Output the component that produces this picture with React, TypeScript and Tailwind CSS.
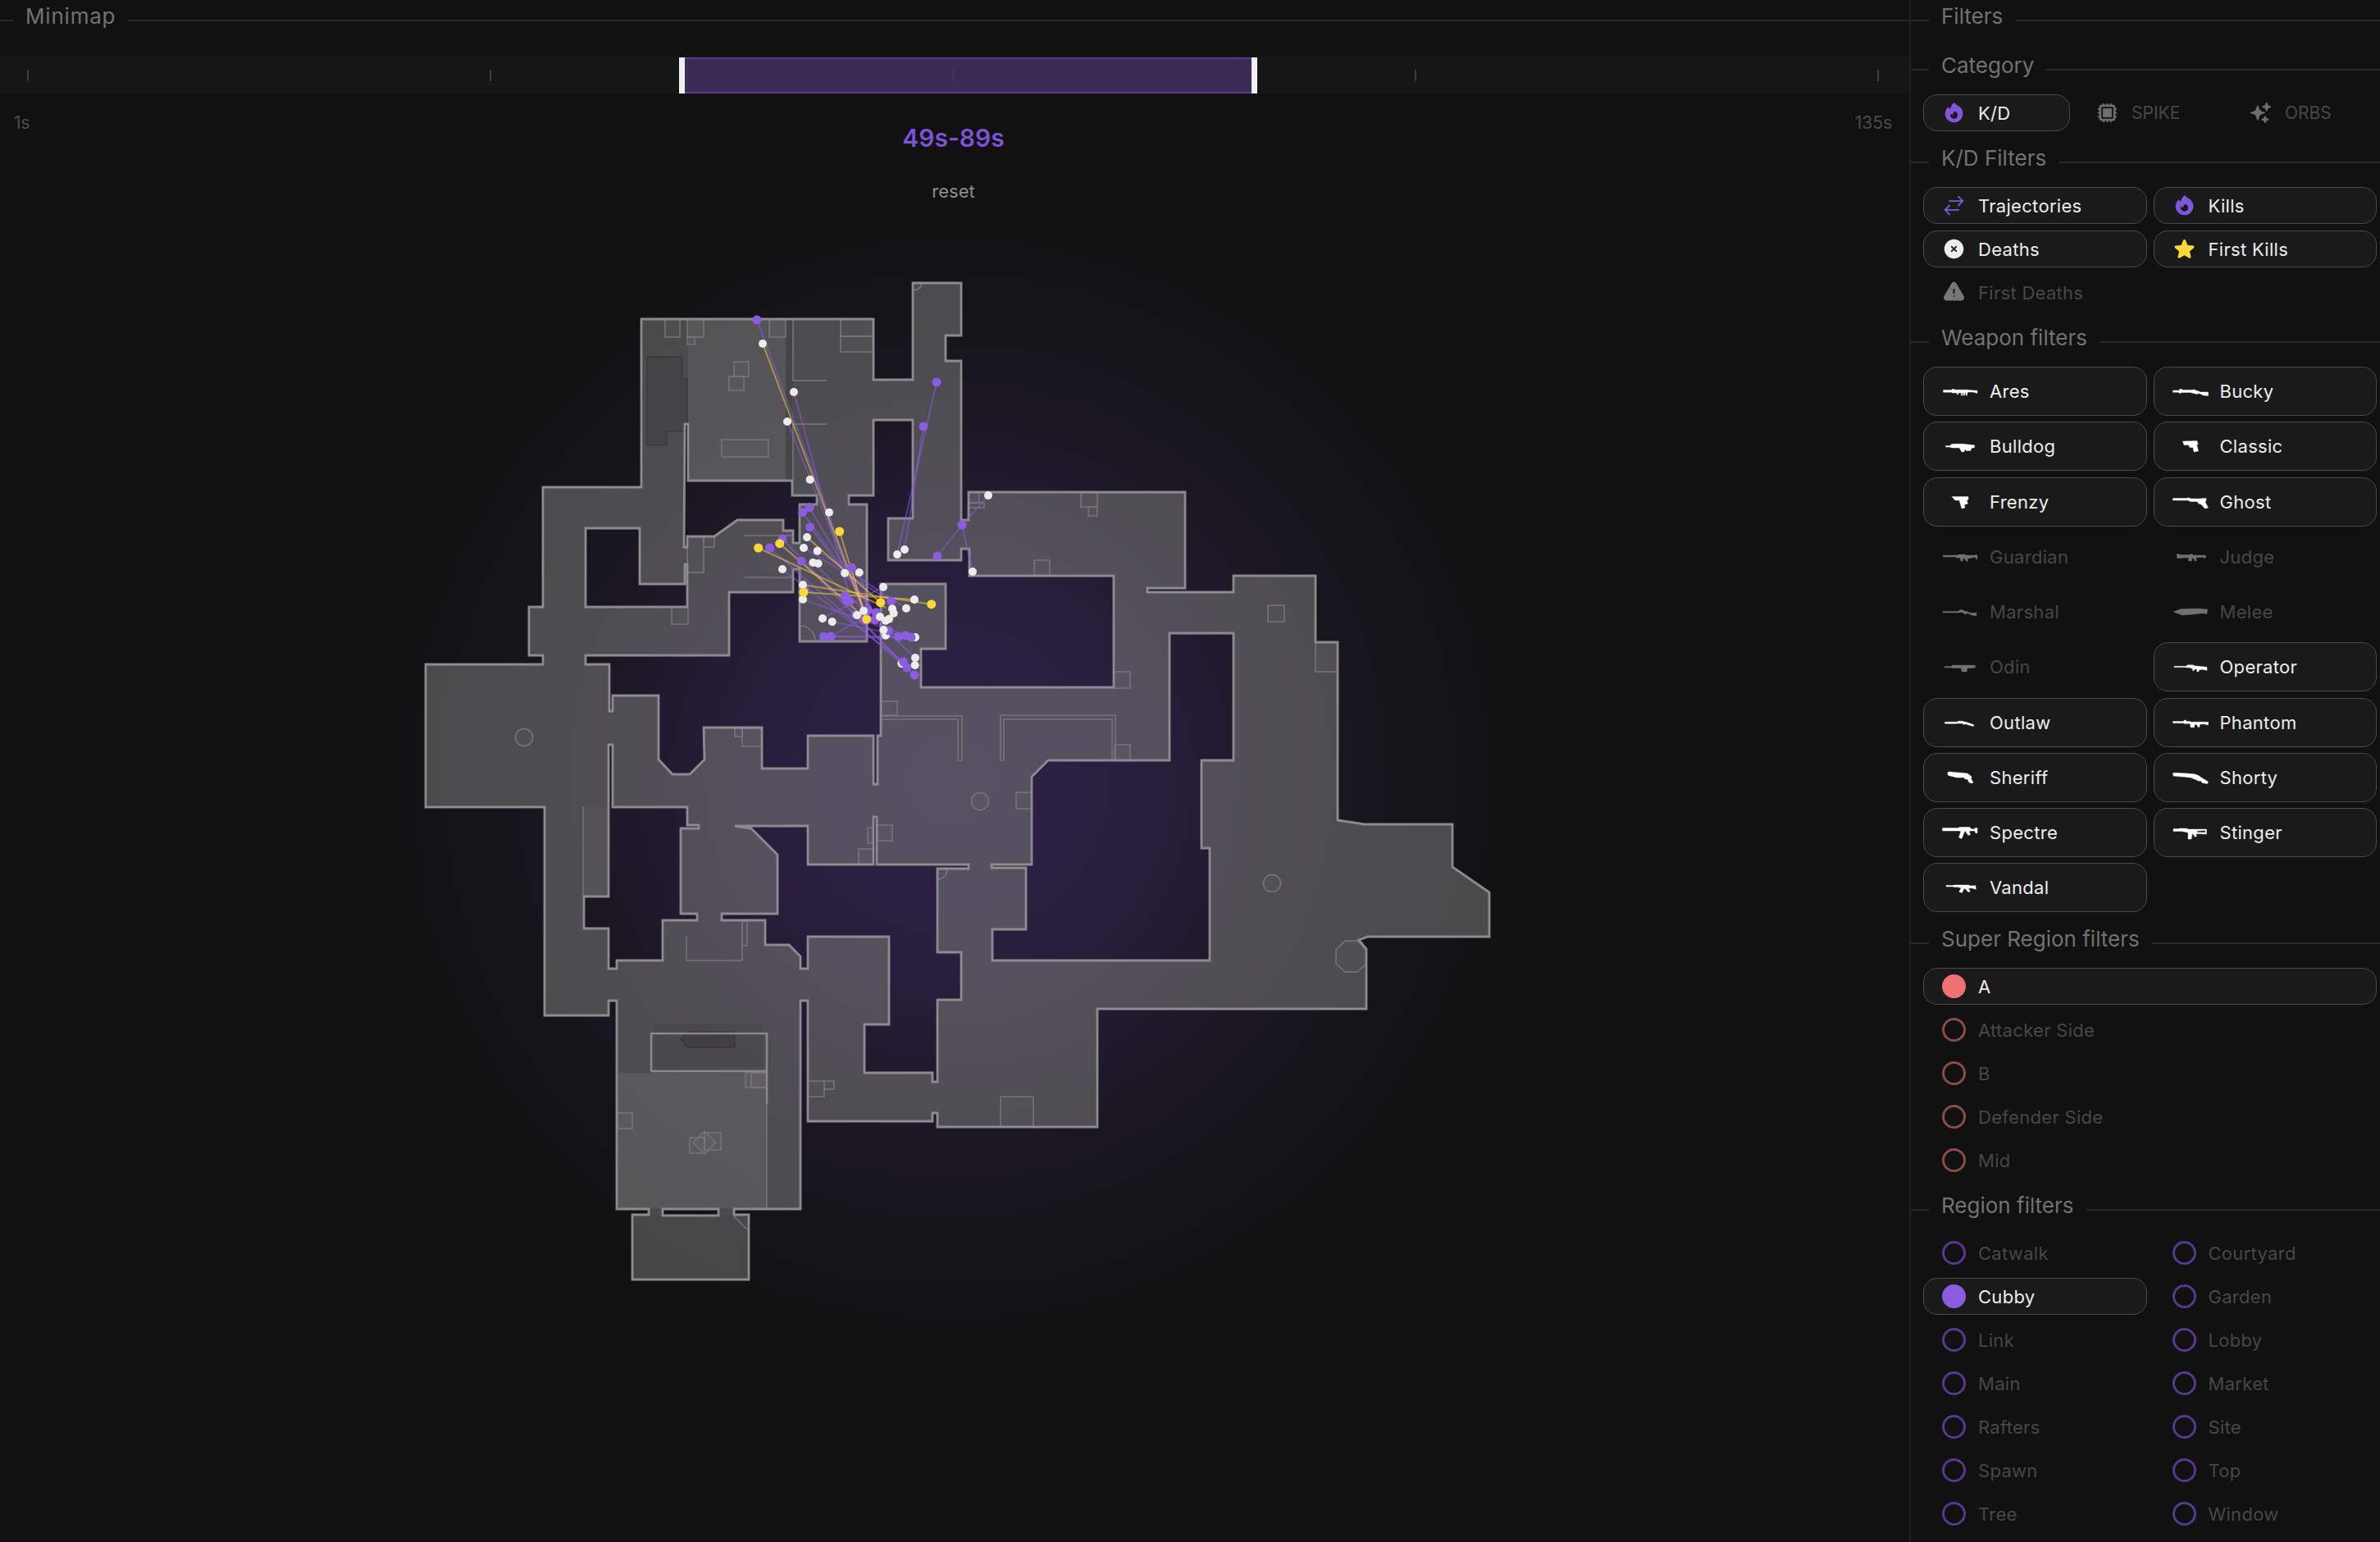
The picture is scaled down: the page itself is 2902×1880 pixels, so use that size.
import type { ReactNode } from "react";
import {
  HiCpuChip,
  HiExclamationTriangle,
  HiFire,
  HiOutlineArrowsRightLeft,
  HiSparkles,
  HiStar,
  HiXCircle,
} from "react-icons/hi2";

const FONT = "font-['Inter','Liberation_Sans',sans-serif]";

const weapons = [
  { name: "Ares", on: true, d: "M1.5 8.6h10l.5-1h3l.5.6H31l1 .4 11 .6v3.4l-3-1-3-.6h-5.5l-.6 1-.4 3h-1.2l-.2-3h-1l-.6 3.2h-1.2l-.1-3.2h-1l-.6 3.2h-1.2l.1-3.2H20l-.8 2h-1v-2h-6l-.5-.8h-10z" },
  { name: "Bucky", on: true, d: "M.5 9h8V7.5h3v1h12l3-.5 2 1 6 2h9v4.5l-6-.5-5-2.5-3 1-8-2H11l-.5.8H8v-1H.5z" },
  { name: "Bulldog", on: true, d: "M4.5 9.5h6V8l3-.8h12l14 1.6v3l-3 .2-2 3.5h-5l-1.5-1.8-1 3-3 .4-2-3.6-.8-1.4h-10l-1-1H4.5z" },
  { name: "Classic", on: true, d: "M12.5 4 30 3.5 31 8h-1.5l2 8-5.5 1-1-5.500h-4l-1.500-3H14z" },
  { name: "Frenzy", on: true, d: "M12 3.500h20V7l-2 1 1.500 4-4.500 1.500 1 3.500-4 1-3-10h-5z" },
  { name: "Ghost", on: true, d: "M.5 5.500H18V5h3l1 1h11l7-.5h1V9l-1.500.5 4 7.500-4 1-4.500-5-3-1-2-2.500h-8l-3-1.500H.5z" },
  { name: "Guardian", on: false, d: "M1 8h18l1-1h8l1 1h10l4-.5v4l-1 1.400-1-.6v-2l-6 1-1 .4-3 .3.8 3-2 .6-2-3.600-2-.4-.6 3.400h-2.400l-1-4h-5L17 10H1z" },
  { name: "Judge", on: false, d: "M5.500 6.500h3v1h12l2-1h2v1.400h16V11l-2 .5v-1h-8l-2 1 1 3-2 .6-2-3.600h-1.500l-.5 3.400H19.500v-3.800H12l-1 .5H5.500z" },
  { name: "Marshal", on: false, d: "M1 9.400h18l2-.6.5-1.200h4l1 1.400 4 .6 3 1.600h8.500v3.600l-5-.6-6-2.400-3 1-3.500-2.200H22l-1 .3H1z" },
  { name: "Melee", on: false, d: "M1 10l9-3.500L24 6h9l10 1-1.500 6-2.500-1.500v.5h-6l-7 1-14 1z" },
  { name: "Odin", on: false, d: "M3 9.500h9V8h26c2 0 3 1 3 2l-2 1.500h-8L30 16h-6l-.5-4.500H12V11H3z" },
  { name: "Operator", on: true, d: "M2 9.300h15v-.8l2-.8h6l2 1 5 .6 10 1v4l-5-1-4 .2-1.500 2.500-2-.5.5-2.500-3-.3-1 2-1.500-.2.2-2-4-1.700-3 .2-2-.4H2z" },
  { name: "Outlaw", on: true, d: "M3.500 9.200H19l.5-1h5l3 .8 3 .8 8 2.800v2l-6-1.500-4-1.500-2 .8-2-1.400H19l-1 .2H3.500z" },
  { name: "Phantom", on: true, d: "M.5 8.600H14V7h2.500v1.600h5l1 .6h21V13l-5-1.200-4 .2-1.500.2v3l-2 .2-1.400-3.200H27l-.5 3.600H22l-.5-4.600H14v-.6H.5z" },
  { name: "Sheriff", on: true, d: "M7 4c0-1 1-1 2-1l17 1.500 5 .5 5 4-.5 3 2.500 4-2 1-3-1-2-4h-3l-1-2h-9L8 7.500C7 7 6.500 5 7 4z" },
  { name: "Shorty", on: true, d: "M.5 4.500C2 4 16 5 24 5.500c4 .2 8 1.500 11 4.500l8.500 5-1 2.500-6-1-3-3-1 1-3-1.500L22 10C14 9 2 8.500 1 8z" },
  { name: "Spectre", on: true, d: "M.5 4.500H20l1-1h13l1 2 5 .5V4.500h3v6l-2 .5-1-3h-5l-2 .5 1.500 4-2.500 1-3.500-5h-1l-3.500 9-3.500-1.500 2.500-7.500-2-.5H.5z" },
  { name: "Stinger", on: true, d: "M1 5.500h7V5h9l2 1h22.500v6l-10-.5-2.800.3.6 3-2 .5-2.300-3.500H24L23 18h-4v-8l-8-1.500H1zM30 8l10-.5V10l-10-.3z" },
  { name: "Vandal", on: true, d: "M5 7.500h9V7h19l1 1 7-.2.3 4.500-5-1.500-4 .3 2 3.900-2.500.5-3.500-4h-1.500l-2.500 5-3.500-1.300 2.500-4.700-4-1h-5v-.5H5z" },
];

const superRegions = ["Attacker Side", "B", "Defender Side", "Mid"];
const regions = [
  "Catwalk", "Courtyard", "Cubby", "Garden", "Link", "Lobby", "Main",
  "Market", "Rafters", "Site", "Spawn", "Top", "Tree", "Window",
];

function Heading({ children, first }: { children: string; first?: boolean }) {
  return (
    <div className={`flex h-[2px] items-center ${first ? "mb-[58px] mt-[24px]" : "mb-[29px] mt-[37px]"}`}>
      <div className="h-[2px] w-[22px] bg-[#2a2a2a]" />
      <span className="mx-[15px] -translate-y-[5px] text-[26px] leading-[36px] text-[#727272]">{children}</span>
      <div className="h-[2px] flex-1 bg-[#2a2a2a]" />
    </div>
  );
}

function Row({ on, tall, small, children, label }: { on: boolean; tall?: boolean; small?: boolean; children: ReactNode; label: string }) {
  return (
    <div
      className={`flex items-center rounded-[17px] border-[1.5px] pl-[22px] ${tall ? "h-[60px] gap-[14px]" : "h-[45px] gap-[15px]"} ${
        on ? "border-[#4a4a4a] bg-[#1a1a1a] text-[#ededed]" : "border-transparent text-[#474747]"
      }`}
    >
      {children}
      <span className={small ? "text-[21px] leading-none" : "text-[22px] leading-none tracking-[0.3px]"}>{label}</span>
    </div>
  );
}

function Dot({ on, tone }: { on: boolean; tone: "red" | "purple" }) {
  if (tone === "red") {
    return <div className={`size-[29px] rounded-full border-[3px] ${on ? "border-[#f07270] bg-[#f07270]" : "border-[#8a4c4a]"}`} />;
  }
  return <div className={`size-[29px] rounded-full border-[3px] ${on ? "border-[#8b5be0] bg-[#8b5be0]" : "border-[#55398f]"}`} />;
}

const floor =
  "M782 388H1065V462H1113V344H1172V408H1153V439H1172V633H1181V599H1445V716H1399V721H1504V701H1604V782H1631V999L1664 1004H1771V1056L1816 1087V1141H1668L1657 1145L1666 1156V1229H1338V1373H1143V1356H1137V1366H985V1219H976V1473H895V1480H913V1559H771V1480H791V1473H752V1219H742V1237H664V983H519V809H662V798H645V739H662V593H782Z " +
  "M808 1473H876V1481H808Z " +
  "M714 643H780V711H835V687H838V739H714Z " +
  "M835 516H839V585H966V603H996V614H975V661H967V646H955V633H899L871 653H838V666H834Z " +
  "M975 693V781H1057V614H1035V603H1065V511H1113V631H1083V682H1172V668H1182V701H1358V837H1123V790H1153V711H1074V896H1070V955H1065V896H985V936H929V886H858L859 925L841 943H820L803 925V847H747V866H743V809H714V798H889V721H967V693Z " +
  "M985 1006H896L916 1009L948 1041V1113H880V1121H933V1151H962L976 1165V1180H985V1141H1084V1248H1054V1307H1137V1318H1143V1218H1172V1160H1143V1058H1181V1053H1069V995H1065V1053H985Z " +
  "M1209 1053H1258V946L1278 926H1426V771H1504V926H1465V1033H1475V1170H1210V1132H1251V1057H1209Z " +
  "M747 907V983H838V1005H852V1009H830V1113H850V1121H808V1170H752V1180H742V1131H712V1092H742V907Z";

const boxes = [
  [811, 388, 18, 22], [838, 388, 20, 22], [838, 410, 9, 9], [938, 388, 20, 22], [1025, 388, 40, 21], [1025, 409, 40, 19],
  [895, 440, 18, 18], [889, 458, 18, 17], [880, 535, 57, 21], [819, 739, 20, 21], [858, 653, 13, 13], [838, 653, 20, 44],
  [896, 887, 9, 10], [905, 887, 24, 22], [1074, 854, 20, 17], [1359, 907, 19, 19], [1358, 818, 20, 20], [1239, 965, 19, 20],
  [1546, 737, 20, 20], [1604, 782, 27, 36], [1261, 682, 19, 19], [1318, 599, 20, 18], [1327, 617, 11, 11], [1181, 599, 13, 13],
  [1181, 612, 19, 6], [1058, 1008, 7, 19], [1070, 1005, 18, 19], [1047, 1034, 18, 19], [905, 1122, 6, 30], [909, 1307, 26, 18],
  [916, 1307, 19, 18], [753, 1356, 18, 19], [841, 1386, 18, 19], [859, 1380, 20, 21], [985, 1317, 20, 19], [1005, 1317, 12, 10],
  [1220, 1336, 40, 37],
];

const rings = [[639, 898], [1195, 976], [1551, 1076]];

// pairs of [x1, y1, x2, y2]; the dense part around the cubby is in crop units
const z = (x: number, y: number) => [880 + x / 3, 580 + y / 3];
const purpleLines = [
  [923, 389, 1057, 752], [968, 477, 1040, 741], [960, 513, 1056, 752], [1142, 465, 1094, 675], [1126, 519, 1103, 669],
  [1173, 639, 1143, 677], [1173, 639, 1205, 603], [1173, 639, 1186, 696],
  ...[
    [321, 113, 560, 520], [296, 131, 600, 560], [323, 185, 610, 563], [222, 228, 660, 680], [176, 261, 705, 726],
    [291, 309, 678, 699], [222, 339, 665, 678], [297, 449, 693, 588], [369, 519, 591, 404], [404, 531, 693, 588],
    [373, 585, 693, 588], [399, 585, 708, 588], [399, 585, 530, 510], [300, 261, 620, 456], [350, 272, 675, 482],
    [334, 315, 708, 663], [475, 333, 520, 490], [503, 351, 560, 524],
  ].map(([a, b, c, d]) => [...z(a, b), ...z(c, d)]),
];
const yellowLines = [
  [930, 418, 1057, 754],
  ...[
    [431, 201, 520, 490], [312, 222, 581, 461], [134, 261, 600, 480], [212, 245, 530, 522], [767, 467, 297, 396], [300, 423, 705, 450],
  ].map(([a, b, c, d]) => [...z(a, b), ...z(c, d)]),
];
const whiteBehind = [[708, 588], [658, 684], [600, 581]].map(([a, b]) => z(a, b));
const white = [
  [930, 418], [968, 477], [960, 513], [1094, 675], [1103, 669], [1205, 603], [1186, 696],
  ...[
    [323, 11], [393, 131], [312, 222], [300, 261], [350, 272], [334, 315], [353, 318], [222, 339], [450, 353], [503, 351],
    [297, 396], [297, 449], [369, 519], [404, 531], [591, 404], [705, 450], [675, 482], [624, 484], [629, 500], [519, 491],
    [495, 507], [579, 513], [612, 521], [600, 527], [592, 561], [708, 663], [707, 690],
  ].map(([a, b]) => z(a, b)),
];
const purple = [
  [923, 389], [1142, 465], [1126, 519], [1173, 639], [1143, 677],
  ...[
    [321, 113], [296, 131], [323, 185], [222, 228], [176, 261], [291, 309], [475, 333], [450, 437], [303, 412], [457, 455],
    [468, 455], [620, 456], [535, 489], [566, 497], [490, 505], [518, 524], [560, 524], [610, 563], [647, 585], [672, 581],
    [693, 588], [373, 585], [399, 585], [665, 678], [678, 699], [705, 726],
  ].map(([a, b]) => z(a, b)),
];
const yellow = [[134, 261], [212, 245], [431, 201], [300, 423], [581, 461], [530, 522], [767, 467]].map(([a, b]) => z(a, b));

function MapDrawing() {
  return (
    <svg viewBox="0 249 2328 1631" className="block h-[1631px] w-[2328px]">
      <defs>
        <radialGradient id="glow" gradientUnits="userSpaceOnUse" cx="1160" cy="950" r="700">
          <stop offset="0" stopColor="#2e2248" />
          <stop offset="0.35" stopColor="#281e3c" />
          <stop offset="0.65" stopColor="#1a1722" />
          <stop offset="1" stopColor="#111111" />
        </radialGradient>
      </defs>
      <circle cx="1160" cy="950" r="700" fill="url(#glow)" />

      <path d={floor} fillRule="evenodd" fill="#7a7a7a" fillOpacity="0.55" />

      {/* lighter and darker rooms */}
      <rect x="839" y="389" width="119" height="196" fill="#fff" fillOpacity="0.05" />
      <rect x="958" y="389" width="8" height="196" fill="#000" fillOpacity="0.1" />
      <path d="M789 434H832V460H838V525H813V542H789Z" fill="#000" fillOpacity="0.1" stroke="#000" strokeOpacity="0.12" strokeWidth="2" />
      <rect x="753" y="1307" width="182" height="165" fill="#fff" fillOpacity="0.07" />
      <rect x="798" y="1247" width="133" height="54" fill="#000" fillOpacity="0.06" />
      <rect x="772" y="1481" width="140" height="77" fill="#000" fillOpacity="0.05" />
      <rect x="712" y="983" width="30" height="109" fill="#fff" fillOpacity="0.04" />

      {/* furniture */}
      <g fill="#fff" fillOpacity="0.02" stroke="#77757a" strokeWidth="1.5">
        {boxes.map(([x, y, w, h], i) => (
          <rect key={i} x={x} y={y} width={w} height={h} />
        ))}
        {rings.map(([x, y], i) => (
          <circle key={i} cx={x} cy={y} r="10.500" />
        ))}
        <path d="M1640 1146H1655L1666 1157V1174L1655 1184H1640L1629 1174V1157Z" />
        <path d="M859 1378L873 1392L859 1406L845 1392Z" />
        <path d="M830 1266L839 1257H896V1276H839Z" fill="#000" fillOpacity="0.12" stroke="#000" strokeOpacity="0.2" />
        <path d="M1074 872H1173V926H1168V876H1074" fill="none" />
        <path d="M1220 926V871H1360V926H1356V876H1224V926Z" fill="none" />
        <path d="M967 388V463H1008M967 585V516H1008M908 652H967M908 703H967" fill="none" />
        <path d="M711 982V1092M837 1141V1170H905V1122M935 1345V1473M895 1482L911 1498" fill="none" />
        <path d="M976 762A18 18 0 0 1 994 780M1113 353A11 9 0 0 0 1124 344M1143 1071A12 12 0 0 0 1155 1059" fill="none" />
      </g>
      <path d="M794 1305V1259H935V1345M794 1305H935" fill="none" stroke="#8b888d" strokeWidth="2.500" />

      <path d={floor} fillRule="evenodd" fill="none" stroke="#8e8b90" strokeWidth="2.800" />

      {/* trajectories */}
      <g strokeWidth="2">
        {purpleLines.map(([a, b, c, d], i) => (
          <line key={i} x1={a} y1={b} x2={c} y2={d} stroke="#8b5be0" strokeOpacity="0.5" />
        ))}
        {yellowLines.map(([a, b, c, d], i) => (
          <line key={i} x1={a} y1={b} x2={c} y2={d} stroke="#fdd835" strokeOpacity="0.5" />
        ))}
      </g>
      {whiteBehind.map(([x, y], i) => (
        <circle key={i} cx={x} cy={y} r="5" fill="#ececec" />
      ))}
      {purple.map(([x, y], i) => (
        <circle key={i} cx={x} cy={y} r="5.500" fill="#8b5be0" />
      ))}
      {white.map(([x, y], i) => (
        <circle key={i} cx={x} cy={y} r="5" fill="#ececec" />
      ))}
      {yellow.map(([x, y], i) => (
        <circle key={i} cx={x} cy={y} r="5.500" fill="#fdd835" />
      ))}
    </svg>
  );
}

function Timeline() {
  return (
    <div className="relative mt-[43px] h-[45px] bg-[#161616]">
      <div className="flex h-full items-center justify-between pl-[33px] pr-[37px]">
        {[0, 1, 2, 3, 4].map((t) => (
          <div key={t} className="h-[14px] w-[2px] bg-[#3c3c3c]" />
        ))}
      </div>
      <div className="absolute left-[828px] top-[1px] flex h-[44px] w-[705px] justify-between border-y-2 border-[#5a3e8e] bg-[#432f60]/85">
        <div className="-my-[2px] w-[7px] bg-[#efefef]" />
        <div className="-my-[2px] w-[7px] bg-[#efefef]" />
      </div>
    </div>
  );
}

export default function App() {
  return (
    <div className={`flex h-screen overflow-hidden bg-[#111111] ${FONT}`}>
      <main className="w-[2328px] shrink-0">
        <div className="flex h-[2px] translate-y-[24px] items-center">
          <div className="h-[2px] w-[16px] bg-[#2a2a2a]" />
          <span className="mx-[15px] -translate-y-[5px] text-[26px] leading-[36px] tracking-[0.8px] text-[#727272]">Minimap</span>
          <div className="h-[2px] flex-1 bg-[#2a2a2a]" />
        </div>
        <div className="h-[24px]" />
        <Timeline />
        <div className="grid h-[136px] grid-cols-[1fr_auto_1fr] items-start text-[#4c4c4c]">
          <span className="mt-[21px] pl-[17px] text-[21px] leading-[30px]">1s</span>
          <div className="flex flex-col items-center pr-[3px]">
            <span className="mt-[34px] text-[30px] font-semibold leading-[40px] text-[#7c52d6]">49s-89s</span>
            <span className="mt-[30px] text-[22px] leading-[30px] text-[#8c8c8c]">reset</span>
          </div>
          <span className="mt-[21px] pr-[21px] text-right text-[21px] leading-[30px]">135s</span>
        </div>
        <MapDrawing />
      </main>

      <aside className="w-[574px] shrink-0 border-l-2 border-[#212121]">
        <Heading first>Filters</Heading>

        <Heading>Category</Heading>
        <div className="ml-[15px] mr-[4px] grid grid-cols-3 gap-[8px]">
          <Row on label="K/D">
            <HiFire className="size-[29px] text-[#8056dc]" />
          </Row>
          <Row on={false} small label="SPIKE">
            <HiCpuChip className="size-[29px] text-[#6d6d6d]" />
          </Row>
          <Row on={false} small label="ORBS">
            <HiSparkles className="size-[29px] text-[#6d6d6d]" />
          </Row>
        </div>

        <Heading>K/D Filters</Heading>
        <div className="ml-[15px] mr-[4px] grid grid-cols-2 gap-[8px]">
          <Row on label="Trajectories">
            <HiOutlineArrowsRightLeft className="size-[29px] text-[#8056dc]" />
          </Row>
          <Row on label="Kills">
            <HiFire className="size-[29px] text-[#8056dc]" />
          </Row>
          <Row on label="Deaths">
            <HiXCircle className="size-[29px] text-[#eeeeee]" />
          </Row>
          <Row on label="First Kills">
            <HiStar className="size-[29px] text-[#fdd835]" />
          </Row>
          <Row on={false} label="First Deaths">
            <HiExclamationTriangle className="size-[29px] text-[#777777]" />
          </Row>
        </div>

        <Heading>Weapon filters</Heading>
        <div className="ml-[15px] mr-[4px] grid grid-cols-2 gap-x-[8px] gap-y-[7.25px]">
          {weapons.map((w) => (
            <Row key={w.name} on={w.on} tall label={w.name}>
              <svg viewBox="0 0 44 20" className="h-[20px] w-[44px]">
                <path d={w.d} fillRule="evenodd" fill={w.on ? "#ffffff" : "#717171"} stroke={w.on ? "#ffffff" : "#717171"} strokeWidth="0.4" />
              </svg>
            </Row>
          ))}
        </div>

        <Heading>Super Region filters</Heading>
        <div className="ml-[15px] mr-[4px] flex flex-col gap-[8px]">
          <Row on label="A">
            <Dot on tone="red" />
          </Row>
          {superRegions.map((r) => (
            <Row key={r} on={false} label={r}>
              <Dot on={false} tone="red" />
            </Row>
          ))}
        </div>

        <Heading>Region filters</Heading>
        <div className="ml-[15px] mr-[4px] grid grid-cols-2 gap-[8px]">
          {regions.map((r) => (
            <Row key={r} on={r === "Cubby"} label={r}>
              <Dot on={r === "Cubby"} tone="purple" />
            </Row>
          ))}
        </div>
      </aside>
    </div>
  );
}
